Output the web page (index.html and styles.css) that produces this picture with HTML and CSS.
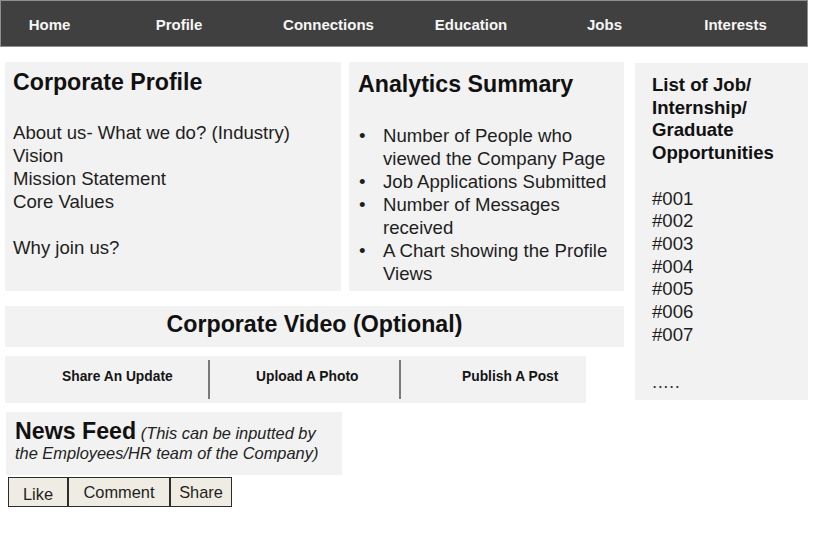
FILE: index.html
```html
<!DOCTYPE html>
<html lang="en">
<head>
<meta charset="utf-8">
<title>Company Page</title>
<link rel="stylesheet" href="styles.css">
</head>
<body>
<nav class="topnav">
  <div class="nav-item">Home</div>
  <div class="nav-item">Profile</div>
  <div class="nav-item">Connections</div>
  <div class="nav-item">Education</div>
  <div class="nav-item">Jobs</div>
  <div class="nav-item">Interests</div>
</nav>
<div class="page">
  <div class="main-col">
    <div class="top-cards">
      <section class="card profile-card">
        <h2 class="card-title">Corporate Profile</h2>
        <div class="plain-lines">
          <div>About us- What we do? (Industry)</div>
          <div>Vision</div>
          <div>Mission Statement</div>
          <div>Core Values</div>
          <div class="gap-line">Why join us?</div>
        </div>
      </section>
      <section class="card analytics-card">
        <h2 class="card-title">Analytics Summary</h2>
        <ul class="bullets">
          <li>Number of People who viewed the Company Page</li>
          <li>Job Applications Submitted</li>
          <li>Number of Messages received</li>
          <li>A Chart showing the Profile Views</li>
        </ul>
      </section>
    </div>
    <section class="card video-bar">Corporate Video (Optional)</section>
    <div class="card actions">
      <div class="action action-share">Share An Update</div>
      <div class="action-sep"></div>
      <div class="action action-upload">Upload A Photo</div>
      <div class="action-sep"></div>
      <div class="action action-publish">Publish A Post</div>
    </div>
    <section class="card news">
      <div class="news-head"><span class="news-title">News Feed</span> <em class="news-note">(This can be inputted by</em></div>
      <div class="news-line"><em class="news-note">the Employees/HR team of the Company)</em></div>
    </section>
    <div class="reactions">
      <div class="react react-like">Like</div>
      <div class="react react-comment">Comment</div>
      <div class="react react-share">Share</div>
    </div>
  </div>
  <aside class="card jobs-card">
    <h3 class="jobs-title">List of Job/<br>Internship/<br>Graduate<br>Opportunities</h3>
    <div class="jobs-list">
      <div>#001</div>
      <div>#002</div>
      <div>#003</div>
      <div>#004</div>
      <div>#005</div>
      <div>#006</div>
      <div>#007</div>
    </div>
    <div class="jobs-more">.....</div>
  </aside>
</div>
</body>
</html>
```

FILE: styles.css
```css
body {
  margin: 0;
  background: #ffffff;
  color: #1e1e1e;
  font-family: "Liberation Sans", Arial, Helvetica, sans-serif;
}

.topnav {
  display: grid;
  grid-template-columns: 97px 162px 137px 148px 119px 1fr;
  width: 808px;
  height: 47px;
  box-sizing: border-box;
  border: 1px solid #8e8e8e;
  background: #404040;
}

.nav-item {
  display: flex;
  align-items: center;
  justify-content: center;
  padding-top: 2px;
  color: #f6f6f6;
  font-size: 15px;
  font-weight: bold;
}

.page {
  display: grid;
  grid-template-columns: 619px 173px;
  column-gap: 11px;
  align-items: start;
  padding: 15px 0 0 5px;
}

.main-col {
  display: flex;
  flex-direction: column;
  align-items: flex-start;
}

.card {
  background: #f2f2f2;
}

.top-cards {
  display: grid;
  grid-template-columns: 336px 275px;
  column-gap: 8px;
  height: 229px;
}

.card-title {
  margin: 0;
  color: #111111;
  font-size: 23.2px;
  line-height: 26px;
  font-weight: bold;
}

.profile-card {
  padding: 7px 8px 0;
}

.profile-card .card-title {
  margin-bottom: 26px;
}

.plain-lines {
  font-size: 18.6px;
  line-height: 23px;
}

.gap-line {
  margin-top: 23px;
}

.analytics-card {
  padding: 9px 9px 0;
}

.analytics-card .card-title {
  margin-bottom: 27px;
}

.bullets {
  margin: 0;
  padding: 0;
  list-style: none;
  font-size: 18.6px;
  line-height: 23px;
}

.bullets li {
  display: grid;
  grid-template-columns: 25px 1fr;
}

.bullets li::before {
  content: "\2022";
  padding-left: 1px;
}

.video-bar {
  width: 100%;
  height: 41px;
  box-sizing: border-box;
  margin-top: 15px;
  padding-top: 5px;
  text-align: center;
  color: #111111;
  font-size: 23.2px;
  line-height: 26px;
  font-weight: bold;
}

.actions {
  display: grid;
  grid-template-columns: 203px 2px 189px 2px 1fr;
  align-items: center;
  width: 581px;
  height: 47px;
  margin-top: 9px;
}

.action {
  padding-bottom: 5px;
  color: #151515;
  font-size: 13.8px;
  line-height: 16px;
  font-weight: bold;
}

.action-share {
  padding-left: 57px;
}

.action-upload {
  padding-left: 46px;
}

.action-publish {
  padding-left: 61px;
}

.action-sep {
  height: 39px;
  background: #7a7a7a;
}

.news {
  width: 336px;
  height: 63px;
  box-sizing: border-box;
  margin-top: 9px;
  margin-left: 1px;
  padding: 7px 9px 0;
  font-size: 16.4px;
}

.news-head {
  height: 24px;
  line-height: 24px;
}

.news-line {
  line-height: 20px;
}

.news-title {
  color: #111111;
  font-size: 23.2px;
  font-weight: bold;
}

.news-note {
  font-style: italic;
  color: #222222;
}

.reactions {
  display: flex;
  margin-top: 2px;
  margin-left: 3px;
}

.react {
  height: 30px;
  box-sizing: border-box;
  border: 1px solid #2c2c2c;
  background: #efede3;
  color: #1e1e1e;
  text-align: center;
  font-size: 16.4px;
  line-height: 28px;
}

.react-like {
  width: 60px;
  padding-top: 4px;
  line-height: 24px;
}

.react-comment {
  width: 102px;
}

.react-share {
  width: 62px;
}

.jobs-card {
  height: 337px;
  box-sizing: border-box;
  margin-top: 1px;
  padding: 11px 10px 0 17px;
  font-size: 18.6px;
  line-height: 22.7px;
}

.jobs-title {
  margin: 0;
  color: #111111;
  font-size: 18.6px;
  line-height: 22.7px;
  font-weight: bold;
}

.jobs-list {
  margin-top: 22.7px;
}

.jobs-more {
  margin-top: 25px;
  color: #333333;
  letter-spacing: 0.5px;
}
```
